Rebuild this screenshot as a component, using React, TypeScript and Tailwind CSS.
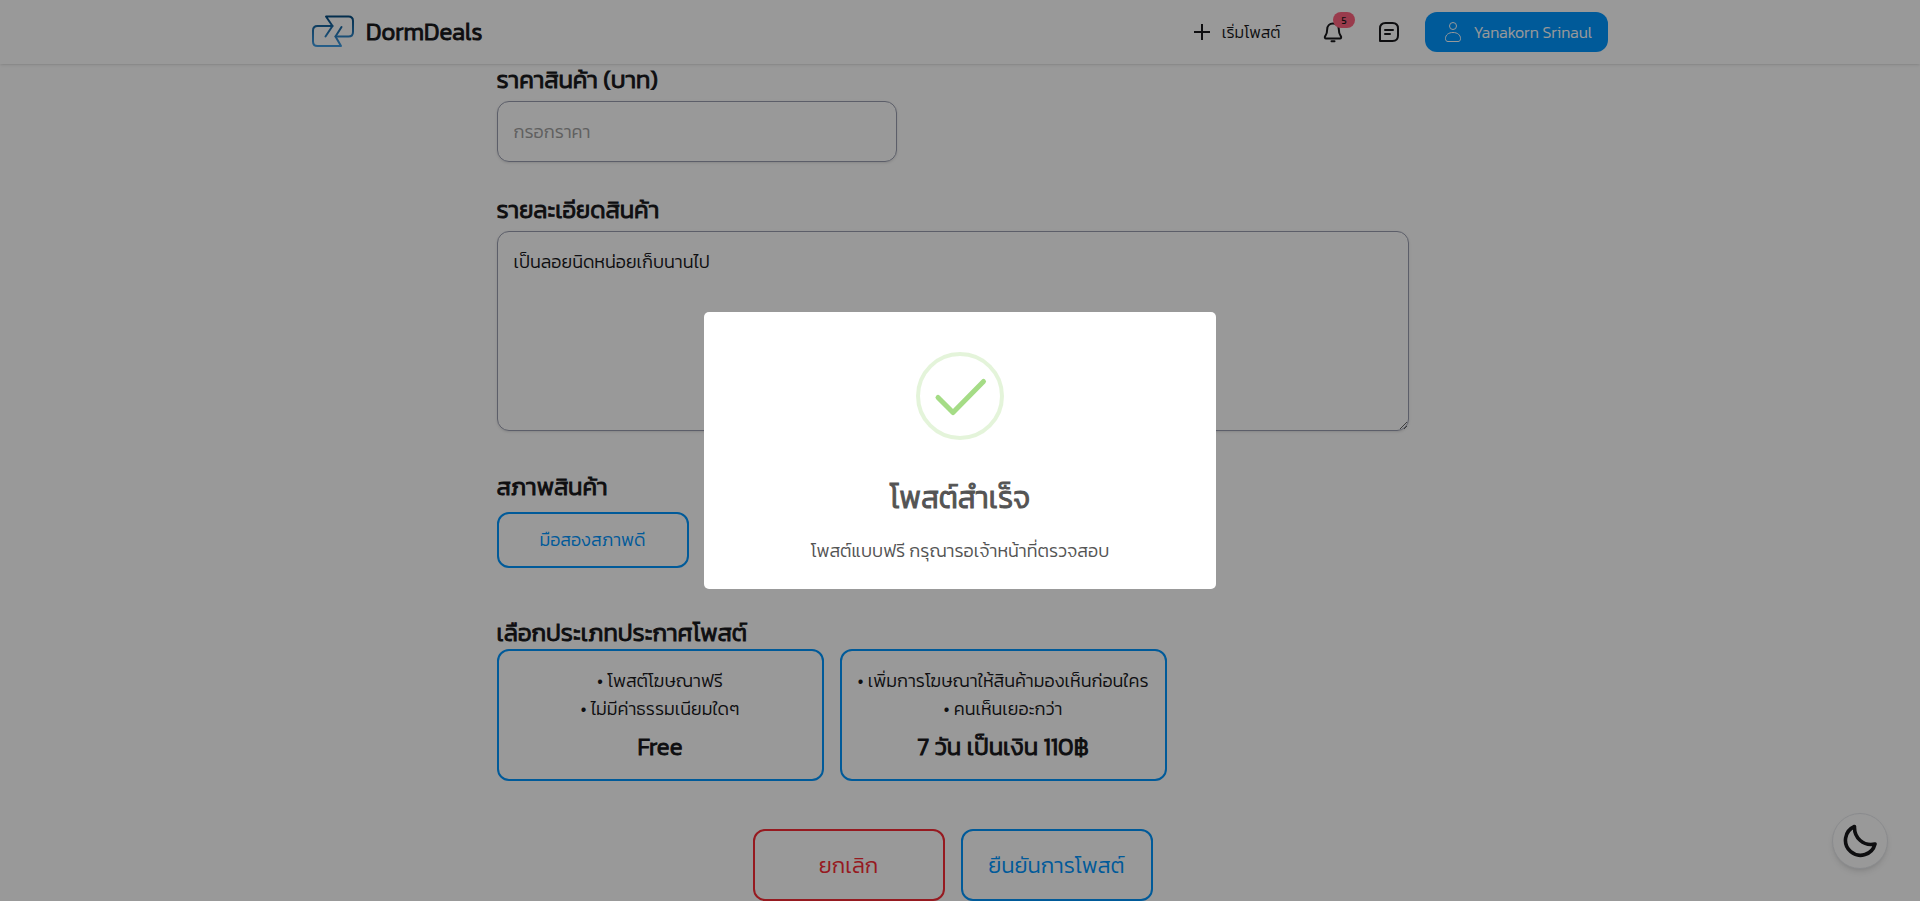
import React from "react";

function Logo() {
  return (
    <svg width="42" height="34" viewBox="0 0 42 34" fill="none" stroke="url(#logo-fill)" strokeWidth="2" strokeLinecap="round" strokeLinejoin="round" aria-hidden="true">
      <defs>
        <linearGradient id="logo-fill" x1="0" y1="0" x2="0" y2="34" gradientUnits="userSpaceOnUse">
          <stop offset="0" stopColor="#04497c" />
          <stop offset="1" stopColor="#46a5ee" />
        </linearGradient>
      </defs>
      <path d="M13.500 21.500 20.500 11 14 1.500H36.500Q41 1.500 41 6V17Q41 21.500 36.500 21.500H23.500" />
      <path d="M20.500 11H5.500Q1 11 1 15.500V26.500Q1 31 5.500 31H29L23.500 21.500 29.500 12" />
    </svg>
  );
}

function PlusIcon() {
  return (
    <svg width="24" height="24" viewBox="0 0 24 24" fill="none" stroke="currentColor" strokeWidth="2" aria-hidden="true">
      <path d="M12 4v16M4 12h16" />
    </svg>
  );
}

function BellIcon() {
  return (
    <svg width="24" height="24" viewBox="0 0 24 24" fill="none" stroke="currentColor" strokeWidth="2" strokeLinejoin="round" aria-hidden="true">
      <path d="M12 3.500C8.500 3.500 6.200 6 6.200 9.300 6.200 14 5 15 4 16.500 3.600 17.300 3.900 18.500 5 18.500H19C20.100 18.500 20.400 17.300 20 16.500 19 15 17.800 14 17.800 9.300 17.800 6 15.500 3.500 12 3.500Z" />
      <path d="M10.500 21.300H13.500" strokeLinecap="round" />
    </svg>
  );
}

function ChatIcon() {
  return (
    <svg width="24" height="24" viewBox="0 0 24 24" fill="none" stroke="currentColor" strokeWidth="2" strokeLinejoin="round" aria-hidden="true">
      <path d="M3 21V8.500Q3 3 8.500 3H15.500Q21 3 21 8.500V15.500Q21 21 15.500 21Z" />
      <path d="M8 10h8M8 14h5" strokeLinecap="round" />
    </svg>
  );
}

function PersonIcon() {
  return (
    <svg width="24" height="24" viewBox="0 0 24 24" fill="none" stroke="currentColor" strokeWidth="1" aria-hidden="true">
      <circle cx="12" cy="6" r="3.500" />
      <path d="M12 12.500C7.500 12.500 4.500 15 4.500 18.500 4.500 20.500 5.300 21.500 7 21.500H17C18.700 21.500 19.500 20.500 19.500 18.500 19.500 15 16.500 12.500 12 12.500Z" />
    </svg>
  );
}

function MoonIcon() {
  return (
    <svg width="34" height="34" viewBox="0 0 34 34" fill="none" stroke="currentColor" strokeWidth="3.600" strokeLinejoin="round" aria-hidden="true">
      <path d="M11.500 2.500A15 15 0 1 0 32 20C20.500 22.500 11 14 11.500 2.500Z" />
    </svg>
  );
}

function Tile({ lines, price }: { lines: string[]; price: string }) {
  return (
    <button type="button" className="flex h-[132px] w-[327px] flex-col items-center justify-center rounded-xl border-2 border-[#0096ff] text-lg leading-7">
      {lines.map((line) => (
        <span key={line} className="whitespace-nowrap">• {line}</span>
      ))}
      <span className="mt-2 text-2xl [-webkit-text-stroke:1px]">{price}</span>
    </button>
  );
}

export default function App() {
  return (
    <div className="h-screen overflow-hidden bg-white font-['Kanit','Noto_Sans_Thai','Noto_Sans',sans-serif] font-light text-[#18181b]">
      <header className="bg-white shadow-sm">
        <div className="mx-auto flex h-16 max-w-[1320px] items-center justify-between px-3">
          <a href="#" className="flex items-center gap-3 text-2xl [-webkit-text-stroke:1px]">
            <Logo />
            DormDeals
          </a>
          <nav className="flex items-center">
            <a href="#" className="mr-[41px] flex items-center gap-2">
              <PlusIcon />
              เริ่มโพสต์
            </a>
            <button type="button" aria-label="การแจ้งเตือน" className="relative mr-8">
              <BellIcon />
              <span className="absolute -top-2 left-3 flex h-4 items-center rounded-full bg-[#ff637f] px-2 text-[10px] font-normal">5</span>
            </button>
            <button type="button" aria-label="ข้อความ" className="mr-6">
              <ChatIcon />
            </button>
            <button type="button" className="flex h-10 items-center gap-2 rounded-xl bg-[#0096ff] px-4 text-white">
              <PersonIcon />
              Yanakorn Srinaul
            </button>
          </nav>
        </div>
      </header>

      <main className="pr-[15px]">
        <form className="mx-auto w-full max-w-[912px]">
          <div>
            <label htmlFor="price" className="block text-2xl [-webkit-text-stroke:1px]">ราคาสินค้า (บาท)</label>
            <input id="price" type="text" placeholder="กรอกราคา" className="mt-[5px] block h-[61px] w-[400px] rounded-xl border border-[#999daf] px-4 text-lg shadow-sm placeholder:text-[#a0a0a0]" />
          </div>

          <div className="mt-8">
            <label htmlFor="detail" className="block text-2xl [-webkit-text-stroke:1px]">รายละเอียดสินค้า</label>
            <textarea id="detail" defaultValue="เป็นลอยนิดหน่อยเก็บนานไป" className="mt-[5px] block h-[200px] w-full rounded-xl border border-[#999daf] p-4 text-lg shadow-sm" />
          </div>

          <div className="mt-10">
            <p className="text-2xl [-webkit-text-stroke:1px]">สภาพสินค้า</p>
            <button type="button" className="mt-[9px] block h-14 w-48 rounded-xl border-2 border-[#0096ff] text-lg text-[#0096ff]">มือสองสภาพดี</button>
          </div>

          <div className="mt-[49px]">
            <p className="text-2xl [-webkit-text-stroke:1px]">เลือกประเภทประกาศโพสต์</p>
            <div className="flex gap-4">
              <Tile lines={["โพสต์โฆษณาฟรี", "ไม่มีค่าธรรมเนียมใดๆ"]} price="Free" />
              <Tile lines={["เพิ่มการโฆษณาให้สินค้ามองเห็นก่อนใคร", "คนเห็นเยอะกว่า"]} price="7 วัน เป็นเงิน 110฿" />
            </div>
          </div>

          <div className="mt-12 flex justify-center gap-4">
            <button type="button" className="h-[72px] w-48 rounded-xl border-2 border-[#fb2c36] text-[22px] text-[#fb2c36]">ยกเลิก</button>
            <button type="submit" className="h-[72px] w-48 rounded-xl border-2 border-[#0096ff] text-[22px] text-[#0096ff]">ยืนยันการโพสต์</button>
          </div>
        </form>
      </main>

      <button type="button" aria-label="โหมดมืด" className="fixed right-8 bottom-8 flex size-14 items-center justify-center rounded-full border border-gray-200 bg-white shadow-md">
        <MoonIcon />
      </button>

      <div className="fixed inset-0 flex items-center justify-center bg-black/40">
        <div role="dialog" aria-modal="true" aria-labelledby="dialog-title" className="flex w-lg flex-col items-center rounded-[5px] bg-white pt-10 pb-6 text-[#545454]">
          <svg width="88" height="88" viewBox="0 0 88 88" fill="none" aria-hidden="true">
            <circle cx="44" cy="44" r="42" stroke="#a5dc86" strokeOpacity="0.3" strokeWidth="4" />
            <path d="M22 45.500 37 60.500 67.500 29.500" stroke="#a5dc86" strokeWidth="5" strokeLinecap="round" strokeLinejoin="round" />
          </svg>
          <h2 id="dialog-title" className="mt-[38px] text-[30px] leading-10 [-webkit-text-stroke:1px]">โพสต์สำเร็จ</h2>
          <p className="mt-[19px] text-lg">โพสต์แบบฟรี กรุณารอเจ้าหน้าที่ตรวจสอบ</p>
        </div>
      </div>
    </div>
  );
}
